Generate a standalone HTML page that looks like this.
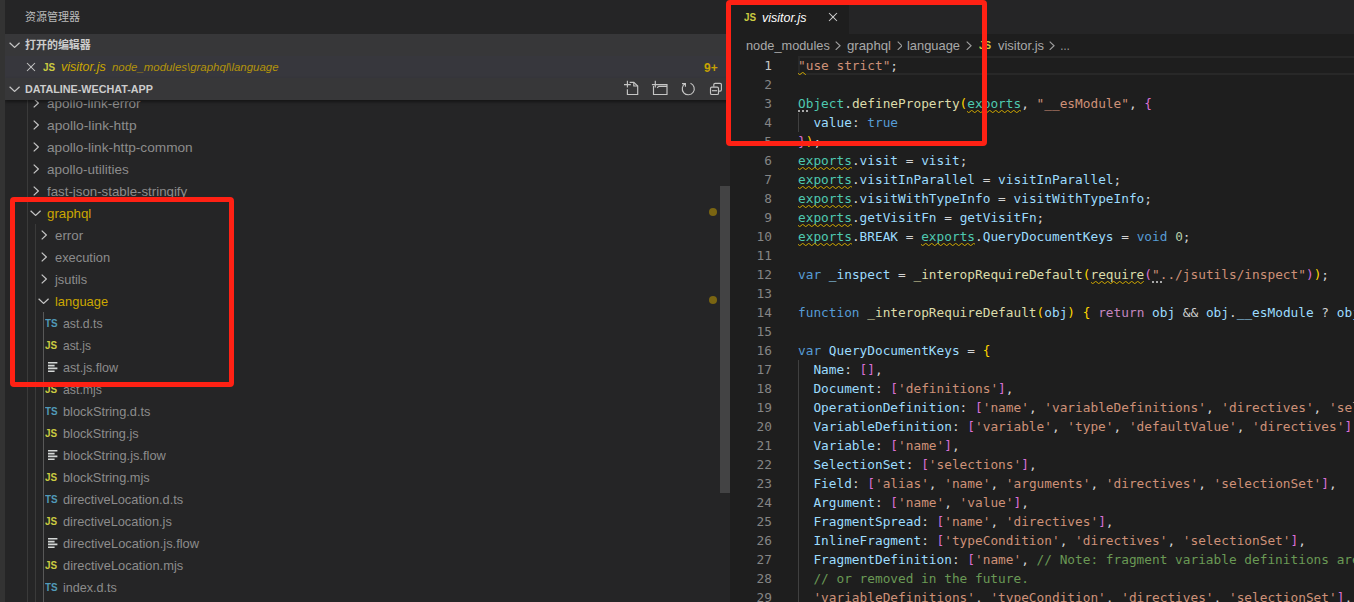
<!DOCTYPE html><html lang="zh-CN"><head><meta charset="utf-8"><title>visitor.js - dataline-wechat-app</title><style>
*{box-sizing:border-box;margin:0;padding:0}
html,body{width:1354px;height:602px;overflow:hidden;background:#1e1e1e}
body{position:relative;font-family:"Liberation Sans","Noto Sans CJK SC",sans-serif;font-size:13px;color:#ccc}
div,span,svg{position:absolute}
.code span{position:static}
#act{left:0;top:0;width:5px;height:602px;background:#333333}
#side{left:5px;top:0;width:725px;height:602px;background:#252526;overflow:hidden}
#ed{left:730px;top:0;width:624px;height:602px;background:#1e1e1e;overflow:hidden}
.t{white-space:pre;line-height:22px;height:22px;transform-origin:0 50%;margin-top:.6px}
.hdr{left:0;width:725px;height:22px;background:#373739}
.b{font-weight:bold}
.i{font-style:italic}
.ign{color:#8c8c8c}
.warn{color:#cca700}
.ic{font-weight:bold;font-size:10.5px;line-height:22px;height:22px;white-space:pre;transform-origin:0 50%;transform:scaleX(.94);margin-top:0px}
.js{color:#cbcb41}
.ts{color:#519aba}
.guide{width:1px;background:#3a3a3a}
.code{left:0;top:56px;width:624px;height:546px;color:#d4d4d4;font-family:"DejaVu Sans Mono","Liberation Mono",monospace;font-size:12.79px}
.ln{left:0;height:19px;line-height:19px;white-space:pre;width:700px}
.num{left:0;width:42px;text-align:right;color:#858585}
.src{left:68px}
.k{color:#569cd6}.c{color:#c586c0}.s{color:#ce9178}.f{color:#dcdcaa}.v{color:#9cdcfe}.o{color:#4ec9b0}.n{color:#b5cea8}.m{color:#6a9955}
.b1{color:#ffd700}.b2{color:#da70d6}.b3{color:#179fff}
.red{border:5px solid #ff2114;border-radius:4px}
</style></head><body><div id="act"></div><div id="side"><div class="t" id="ttl" style="left:20px;top:5.2px;font-size:11px;color:#bbbbbb;transform:scaleX(1.0000);">资源管理器</div>
<svg style="left:28.10px;top:98.00px" width="6.20" height="10.00" viewBox="0 0 6.20 10.00"><polyline fill="none" stroke="#c5c5c5" stroke-width="1.25" points="0.70,0.60 5.40,5.00 0.70,9.40"/></svg>
<div class="t ign" id="tree0" style="left:42px;top:92px;transform:scaleX(1.0364);">apollo-link-error</div>
<svg style="left:28.10px;top:120.00px" width="6.20" height="10.00" viewBox="0 0 6.20 10.00"><polyline fill="none" stroke="#c5c5c5" stroke-width="1.25" points="0.70,0.60 5.40,5.00 0.70,9.40"/></svg>
<div class="t ign" id="tree1" style="left:42px;top:114px;transform:scaleX(1.0598);">apollo-link-http</div>
<svg style="left:28.10px;top:142.00px" width="6.20" height="10.00" viewBox="0 0 6.20 10.00"><polyline fill="none" stroke="#c5c5c5" stroke-width="1.25" points="0.70,0.60 5.40,5.00 0.70,9.40"/></svg>
<div class="t ign" id="tree2" style="left:42px;top:136px;transform:scaleX(1.0502);">apollo-link-http-common</div>
<svg style="left:28.10px;top:164.00px" width="6.20" height="10.00" viewBox="0 0 6.20 10.00"><polyline fill="none" stroke="#c5c5c5" stroke-width="1.25" points="0.70,0.60 5.40,5.00 0.70,9.40"/></svg>
<div class="t ign" id="tree3" style="left:42px;top:158px;transform:scaleX(1.0385);">apollo-utilities</div>
<svg style="left:28.10px;top:186.00px" width="6.20" height="10.00" viewBox="0 0 6.20 10.00"><polyline fill="none" stroke="#c5c5c5" stroke-width="1.25" points="0.70,0.60 5.40,5.00 0.70,9.40"/></svg>
<div class="t ign" id="tree4" style="left:42px;top:180px;transform:scaleX(1.0213);">fast-json-stable-stringify</div>
<svg style="left:25.40px;top:209.90px" width="11.20" height="6.20" viewBox="0 0 11.20 6.20"><polyline fill="none" stroke="#c5c5c5" stroke-width="1.25" points="0.60,0.70 5.60,5.40 10.60,0.70"/></svg>
<div class="t warn" id="tree5" style="left:42px;top:202px;transform:scaleX(1.0213);">graphql</div>
<svg style="left:36.10px;top:230.00px" width="6.20" height="10.00" viewBox="0 0 6.20 10.00"><polyline fill="none" stroke="#c5c5c5" stroke-width="1.25" points="0.70,0.60 5.40,5.00 0.70,9.40"/></svg>
<div class="t ign" id="tree6" style="left:50px;top:224px;transform:scaleX(1.0236);">error</div>
<svg style="left:36.10px;top:252.00px" width="6.20" height="10.00" viewBox="0 0 6.20 10.00"><polyline fill="none" stroke="#c5c5c5" stroke-width="1.25" points="0.70,0.60 5.40,5.00 0.70,9.40"/></svg>
<div class="t ign" id="tree7" style="left:50px;top:246px;transform:scaleX(0.9900);">execution</div>
<svg style="left:36.10px;top:274.00px" width="6.20" height="10.00" viewBox="0 0 6.20 10.00"><polyline fill="none" stroke="#c5c5c5" stroke-width="1.25" points="0.70,0.60 5.40,5.00 0.70,9.40"/></svg>
<div class="t ign" id="tree8" style="left:50px;top:268px;transform:scaleX(0.9872);">jsutils</div>
<svg style="left:33.20px;top:297.90px" width="11.20" height="6.20" viewBox="0 0 11.20 6.20"><polyline fill="none" stroke="#c5c5c5" stroke-width="1.25" points="0.60,0.70 5.60,5.40 10.60,0.70"/></svg>
<div class="t warn" id="tree9" style="left:50px;top:290px;transform:scaleX(0.9925);">language</div>
<div class="ic ts" style="left:40.3px;top:312px">TS</div>
<div class="t ign" id="tree10" style="left:58px;top:312px;transform:scaleX(0.9446);">ast.d.ts</div>
<div class="ic js" style="left:40.2px;top:334px">JS</div>
<div class="t ign" id="tree11" style="left:58px;top:334px;transform:scaleX(0.9195);">ast.js</div>
<svg style="left:43.2px;top:362px" width="10" height="10" viewBox="0 0 10 10"><path fill="#d4d7d6" d="M0 0h9.4v1.6H0zM0 2.8h6.6v1.6H0zM0 5.6h9.4v1.6H0zM0 8.4h6.6v1.6H0z"/></svg>
<div class="t ign" id="tree12" style="left:58px;top:356px;transform:scaleX(0.9671);">ast.js.flow</div>
<div class="ic js" style="left:40.2px;top:378px">JS</div>
<div class="t ign" id="tree13" style="left:58px;top:378px;transform:scaleX(0.9448);">ast.mjs</div>
<div class="ic ts" style="left:40.3px;top:400px">TS</div>
<div class="t ign" id="tree14" style="left:58px;top:400px;transform:scaleX(0.9845);">blockString.d.ts</div>
<div class="ic js" style="left:40.2px;top:422px">JS</div>
<div class="t ign" id="tree15" style="left:58px;top:422px;transform:scaleX(0.9778);">blockString.js</div>
<svg style="left:43.2px;top:450px" width="10" height="10" viewBox="0 0 10 10"><path fill="#d4d7d6" d="M0 0h9.4v1.6H0zM0 2.8h6.6v1.6H0zM0 5.6h9.4v1.6H0zM0 8.4h6.6v1.6H0z"/></svg>
<div class="t ign" id="tree16" style="left:58px;top:444px;transform:scaleX(0.9890);">blockString.js.flow</div>
<div class="ic js" style="left:40.2px;top:466px">JS</div>
<div class="t ign" id="tree17" style="left:58px;top:466px;transform:scaleX(0.9837);">blockString.mjs</div>
<div class="ic ts" style="left:40.3px;top:488px">TS</div>
<div class="t ign" id="tree18" style="left:58px;top:488px;transform:scaleX(0.9842);">directiveLocation.d.ts</div>
<div class="ic js" style="left:40.2px;top:510px">JS</div>
<div class="t ign" id="tree19" style="left:58px;top:510px;transform:scaleX(0.9841);">directiveLocation.js</div>
<svg style="left:43.2px;top:538px" width="10" height="10" viewBox="0 0 10 10"><path fill="#d4d7d6" d="M0 0h9.4v1.6H0zM0 2.8h6.6v1.6H0zM0 5.6h9.4v1.6H0zM0 8.4h6.6v1.6H0z"/></svg>
<div class="t ign" id="tree20" style="left:58px;top:532px;transform:scaleX(0.9913);">directiveLocation.js.flow</div>
<div class="ic js" style="left:40.2px;top:554px">JS</div>
<div class="t ign" id="tree21" style="left:58px;top:554px;transform:scaleX(0.9902);">directiveLocation.mjs</div>
<div class="ic ts" style="left:40.3px;top:576px">TS</div>
<div class="t ign" id="tree22" style="left:58px;top:576px;transform:scaleX(0.9684);">index.d.ts</div>
<div class="guide" style="left:22px;top:100px;height:502px"></div>
<div class="guide" style="left:30px;top:224px;height:378px"></div>
<div class="guide" style="left:38px;top:312px;height:290px;background:#585858"></div>
<div style="left:704px;top:208px;width:8px;height:8px;border-radius:4px;background:#7a6512"></div>
<div style="left:704px;top:296px;width:8px;height:8px;border-radius:4px;background:#7a6512"></div>
<div style="left:715px;top:186px;width:10px;height:307px;background:#434344"></div>
<div class="hdr" style="top:34px"></div>
<svg style="left:4.05px;top:41.90px" width="11.20" height="6.20" viewBox="0 0 11.20 6.20"><polyline fill="none" stroke="#c5c5c5" stroke-width="1.25" points="0.60,0.70 5.60,5.40 10.60,0.70"/></svg>
<div class="t b" id="h1" style="left:20px;top:33px;font-size:11px;color:#cccccc;transform:scaleX(0.9970);">打开的编辑器</div>
<div class="hdr" style="top:56px;background:#37373d"></div>
<svg style="left:18px;top:59px" width="16" height="16" viewBox="0 0 16 16"><path fill="#c5c5c5" d="M8 8.707l3.646 3.647.708-.707L8.707 8l3.647-3.646-.707-.708L8 7.293 4.354 3.646l-.707.708L7.293 8l-3.646 3.646.707.708L8 8.707z"/></svg>
<div class="ic js" style="left:37.6px;top:56px">JS</div>
<div class="t i warn" id="oe1" style="left:55.6px;top:55.3px;transform:scaleX(0.9619);">visitor.js</div>
<div class="t i" id="oe2" style="left:107.2px;top:55.4px;font-size:11.2px;color:#b3930a;transform:scaleX(1.0216);">node_modules\graphql\language</div>
<div class="t b" id="oe3" style="left:698.6px;top:56px;font-size:12.5px;color:#c7a203;transform:scaleX(0.9604);">9+</div>
<div class="hdr" style="top:78px;box-shadow:0 2px 3px rgba(0,0,0,.45)"></div>
<svg style="left:4.05px;top:85.90px" width="11.20" height="6.20" viewBox="0 0 11.20 6.20"><polyline fill="none" stroke="#c5c5c5" stroke-width="1.25" points="0.60,0.70 5.60,5.40 10.60,0.70"/></svg>
<div class="t b" id="h2" style="left:20px;top:77px;font-size:11px;color:#cccccc;transform:scaleX(0.9781);">DATALINE-WECHAT-APP</div>
<svg style="left:610px;top:75px" width="115" height="30" viewBox="615 75 115 30" fill="none" stroke="#c5c5c5" stroke-width="1.15"><path d="M624 84.600h6.800M627.400 80.800v6.800"/><path d="M627.400 89.200V94.500H637.700V86L633.800 82.400H629.600"/><path d="M633.800 82.400V86H637.700"/><path d="M651.900 84.600h15.100V94.500H653.500V86M655.300 80.800v6.800"/><path d="M657.100 87.800L658.900 86.400H667"/><path d="M682 83.600H685.400V86.800M685.400 83.500A6 6 0 1 0 690.500 83.200"/><path d="M713.800 86.800V84.600Q713.800 83.300 715.100 83.300H720.100Q721.400 83.300 721.400 84.600V89.800Q721.400 91.100 720.100 91.100H718.900"/><rect x="710.500" y="87.100" width="8" height="7.400" rx="1.300"/><path d="M711.900 90.700h5.200"/></svg></div><div id="ed"><div style="left:0;top:0;width:624px;height:34px;background:#252526"></div>
<div style="left:0;top:0;width:118.5px;height:34px;background:#1e1e1e"></div>
<div class="ic js" style="left:13.6px;top:6px">JS</div>
<div class="t i" id="tab" style="left:32.2px;top:6px;color:#ffffff;transform:scaleX(0.9598);">visitor.js</div>
<svg style="left:95px;top:9px" width="16" height="16" viewBox="0 0 16 16"><path fill="#d0d0d0" d="M8 8.707l3.646 3.647.708-.707L8.707 8l3.647-3.646-.707-.708L8 7.293 4.354 3.646l-.707.708L7.293 8l-3.646 3.646.707.708L8 8.707z"/></svg>
<div class="t" id="bc0" style="left:16.0px;top:34px;color:#a9a9a9;transform:scaleX(0.9825);">node_modules</div>
<div class="t" id="bc1" style="left:116.6px;top:34px;color:#a9a9a9;transform:scaleX(1.0144);">graphql</div>
<div class="t" id="bc2" style="left:176.8px;top:34px;color:#a9a9a9;transform:scaleX(0.9907);">language</div>
<div class="t" id="bc3" style="left:268.2px;top:34px;color:#a9a9a9;transform:scaleX(0.9971);">visitor.js</div>
<div class="t" id="bc4" style="left:330.0px;top:34px;color:#a9a9a9;transform:scaleX(0.7692);">…</div>
<svg style="left:105.45px;top:40.65px" width="5.89" height="9.50" viewBox="0 0 5.89 9.50"><polyline fill="none" stroke="#a0a0a0" stroke-width="1.10" points="0.70,0.60 5.09,4.75 0.70,8.90"/></svg>
<svg style="left:166.56px;top:40.65px" width="5.89" height="9.50" viewBox="0 0 5.89 9.50"><polyline fill="none" stroke="#a0a0a0" stroke-width="1.10" points="0.70,0.60 5.09,4.75 0.70,8.90"/></svg>
<svg style="left:236.06px;top:40.65px" width="5.89" height="9.50" viewBox="0 0 5.89 9.50"><polyline fill="none" stroke="#a0a0a0" stroke-width="1.10" points="0.70,0.60 5.09,4.75 0.70,8.90"/></svg>
<svg style="left:319.46px;top:40.65px" width="5.89" height="9.50" viewBox="0 0 5.89 9.50"><polyline fill="none" stroke="#a0a0a0" stroke-width="1.10" points="0.70,0.60 5.09,4.75 0.70,8.90"/></svg>
<div class="ic js" style="left:249.0px;top:34px">JS</div>
<div class="code">
<div style="left:68px;top:0;width:600px;height:19px;border:2px solid #282828"></div>
<div style="left:68px;top:57px;width:1px;height:19px;background:#404040"></div>
<div style="left:68px;top:304px;width:1px;height:247px;background:#404040"></div>
<div class="ln" style="top:0px"><div class="num" style="color:#c6c6c6">1</div><div class="src"><span class="s">"use strict"</span>;</div></div>
<div class="ln" style="top:19px"><div class="num">2</div><div class="src"></div></div>
<div class="ln" style="top:38px"><div class="num">3</div><div class="src"><span class="o">Object</span>.<span class="f">defineProperty</span><span class="b1">(</span><span class="o">exports</span>, <span class="s">"__esModule"</span>, <span class="b2">{</span></div></div>
<div class="ln" style="top:57px"><div class="num">4</div><div class="src">  <span class="v">value</span>: <span class="k">true</span></div></div>
<div class="ln" style="top:76px"><div class="num">5</div><div class="src"><span class="b2">}</span><span class="b1">)</span>;</div></div>
<div class="ln" style="top:95px"><div class="num">6</div><div class="src"><span class="o">exports</span>.<span class="v">visit</span> = <span class="v">visit</span>;</div></div>
<div class="ln" style="top:114px"><div class="num">7</div><div class="src"><span class="o">exports</span>.<span class="v">visitInParallel</span> = <span class="v">visitInParallel</span>;</div></div>
<div class="ln" style="top:133px"><div class="num">8</div><div class="src"><span class="o">exports</span>.<span class="v">visitWithTypeInfo</span> = <span class="v">visitWithTypeInfo</span>;</div></div>
<div class="ln" style="top:152px"><div class="num">9</div><div class="src"><span class="o">exports</span>.<span class="v">getVisitFn</span> = <span class="v">getVisitFn</span>;</div></div>
<div class="ln" style="top:171px"><div class="num">10</div><div class="src"><span class="o">exports</span>.<span class="v">BREAK</span> = <span class="o">exports</span>.<span class="v">QueryDocumentKeys</span> = <span class="k">void</span> <span class="n">0</span>;</div></div>
<div class="ln" style="top:190px"><div class="num">11</div><div class="src"></div></div>
<div class="ln" style="top:209px"><div class="num">12</div><div class="src"><span class="k">var</span> <span class="v">_inspect</span> = <span class="f">_interopRequireDefault</span><span class="b1">(</span><span class="f">require</span><span class="b2">(</span><span class="s">"../jsutils/inspect"</span><span class="b2">)</span><span class="b1">)</span>;</div></div>
<div class="ln" style="top:228px"><div class="num">13</div><div class="src"></div></div>
<div class="ln" style="top:247px"><div class="num">14</div><div class="src"><span class="k">function</span> <span class="f">_interopRequireDefault</span><span class="b1">(</span><span class="v">obj</span><span class="b1">)</span> <span class="b1">{</span> <span class="c">return</span> <span class="v">obj</span> &amp;&amp; <span class="v">obj</span>.<span class="v">__esModule</span> ? <span class="v">obj</span> : <span class="b2">{</span> <span class="k">default</span>: <span class="v">obj</span> <span class="b2">}</span>; <span class="b1">}</span></div></div>
<div class="ln" style="top:266px"><div class="num">15</div><div class="src"></div></div>
<div class="ln" style="top:285px"><div class="num">16</div><div class="src"><span class="k">var</span> <span class="v">QueryDocumentKeys</span> = <span class="b1">{</span></div></div>
<div class="ln" style="top:304px"><div class="num">17</div><div class="src">  <span class="v">Name</span>: <span class="b2">[</span><span class="b2">]</span>,</div></div>
<div class="ln" style="top:323px"><div class="num">18</div><div class="src">  <span class="v">Document</span>: <span class="b2">[</span><span class="s">'definitions'</span><span class="b2">]</span>,</div></div>
<div class="ln" style="top:342px"><div class="num">19</div><div class="src">  <span class="v">OperationDefinition</span>: <span class="b2">[</span><span class="s">'name'</span>, <span class="s">'variableDefinitions'</span>, <span class="s">'directives'</span>, <span class="s">'selectionSet'</span><span class="b2">]</span>,</div></div>
<div class="ln" style="top:361px"><div class="num">20</div><div class="src">  <span class="v">VariableDefinition</span>: <span class="b2">[</span><span class="s">'variable'</span>, <span class="s">'type'</span>, <span class="s">'defaultValue'</span>, <span class="s">'directives'</span><span class="b2">]</span>,</div></div>
<div class="ln" style="top:380px"><div class="num">21</div><div class="src">  <span class="v">Variable</span>: <span class="b2">[</span><span class="s">'name'</span><span class="b2">]</span>,</div></div>
<div class="ln" style="top:399px"><div class="num">22</div><div class="src">  <span class="v">SelectionSet</span>: <span class="b2">[</span><span class="s">'selections'</span><span class="b2">]</span>,</div></div>
<div class="ln" style="top:418px"><div class="num">23</div><div class="src">  <span class="v">Field</span>: <span class="b2">[</span><span class="s">'alias'</span>, <span class="s">'name'</span>, <span class="s">'arguments'</span>, <span class="s">'directives'</span>, <span class="s">'selectionSet'</span><span class="b2">]</span>,</div></div>
<div class="ln" style="top:437px"><div class="num">24</div><div class="src">  <span class="v">Argument</span>: <span class="b2">[</span><span class="s">'name'</span>, <span class="s">'value'</span><span class="b2">]</span>,</div></div>
<div class="ln" style="top:456px"><div class="num">25</div><div class="src">  <span class="v">FragmentSpread</span>: <span class="b2">[</span><span class="s">'name'</span>, <span class="s">'directives'</span><span class="b2">]</span>,</div></div>
<div class="ln" style="top:475px"><div class="num">26</div><div class="src">  <span class="v">InlineFragment</span>: <span class="b2">[</span><span class="s">'typeCondition'</span>, <span class="s">'directives'</span>, <span class="s">'selectionSet'</span><span class="b2">]</span>,</div></div>
<div class="ln" style="top:494px"><div class="num">27</div><div class="src">  <span class="v">FragmentDefinition</span>: <span class="b2">[</span><span class="s">'name'</span>, <span class="m">// Note: fragment variable definitions are experimental and may be changed</span></div></div>
<div class="ln" style="top:513px"><div class="num">28</div><div class="src">  <span class="m">// or removed in the future.</span></div></div>
<div class="ln" style="top:532px"><div class="num">29</div><div class="src">  <span class="s">'variableDefinitions'</span>, <span class="s">'typeCondition'</span>, <span class="s">'directives'</span>, <span class="s">'selectionSet'</span><span class="b2">]</span>,</div></div>
<svg style="left:68.00px;top:16px" width="7.70" height="3" viewBox="0 0 7.70 3"><polyline fill="none" stroke="#d0a800" stroke-width="1" points="-1.25,0.3 1.75,2.7 4.75,0.3 7.75,2.7 10.75,0.3"/></svg>
<svg style="left:237.40px;top:54px" width="53.90" height="3" viewBox="0 0 53.90 3"><polyline fill="none" stroke="#d0a800" stroke-width="1" points="-1.25,0.3 1.75,2.7 4.75,0.3 7.75,2.7 10.75,0.3 13.75,2.7 16.75,0.3 19.75,2.7 22.75,0.3 25.75,2.7 28.75,0.3 31.75,2.7 34.75,0.3 37.75,2.7 40.75,0.3 43.75,2.7 46.75,0.3 49.75,2.7 52.75,0.3 55.75,2.7 58.75,0.3"/></svg>
<svg style="left:68.00px;top:111px" width="53.90" height="3" viewBox="0 0 53.90 3"><polyline fill="none" stroke="#d0a800" stroke-width="1" points="-1.25,0.3 1.75,2.7 4.75,0.3 7.75,2.7 10.75,0.3 13.75,2.7 16.75,0.3 19.75,2.7 22.75,0.3 25.75,2.7 28.75,0.3 31.75,2.7 34.75,0.3 37.75,2.7 40.75,0.3 43.75,2.7 46.75,0.3 49.75,2.7 52.75,0.3 55.75,2.7 58.75,0.3"/></svg>
<svg style="left:68.00px;top:130px" width="53.90" height="3" viewBox="0 0 53.90 3"><polyline fill="none" stroke="#d0a800" stroke-width="1" points="-1.25,0.3 1.75,2.7 4.75,0.3 7.75,2.7 10.75,0.3 13.75,2.7 16.75,0.3 19.75,2.7 22.75,0.3 25.75,2.7 28.75,0.3 31.75,2.7 34.75,0.3 37.75,2.7 40.75,0.3 43.75,2.7 46.75,0.3 49.75,2.7 52.75,0.3 55.75,2.7 58.75,0.3"/></svg>
<svg style="left:68.00px;top:149px" width="53.90" height="3" viewBox="0 0 53.90 3"><polyline fill="none" stroke="#d0a800" stroke-width="1" points="-1.25,0.3 1.75,2.7 4.75,0.3 7.75,2.7 10.75,0.3 13.75,2.7 16.75,0.3 19.75,2.7 22.75,0.3 25.75,2.7 28.75,0.3 31.75,2.7 34.75,0.3 37.75,2.7 40.75,0.3 43.75,2.7 46.75,0.3 49.75,2.7 52.75,0.3 55.75,2.7 58.75,0.3"/></svg>
<svg style="left:68.00px;top:168px" width="53.90" height="3" viewBox="0 0 53.90 3"><polyline fill="none" stroke="#d0a800" stroke-width="1" points="-1.25,0.3 1.75,2.7 4.75,0.3 7.75,2.7 10.75,0.3 13.75,2.7 16.75,0.3 19.75,2.7 22.75,0.3 25.75,2.7 28.75,0.3 31.75,2.7 34.75,0.3 37.75,2.7 40.75,0.3 43.75,2.7 46.75,0.3 49.75,2.7 52.75,0.3 55.75,2.7 58.75,0.3"/></svg>
<svg style="left:68.00px;top:187px" width="53.90" height="3" viewBox="0 0 53.90 3"><polyline fill="none" stroke="#d0a800" stroke-width="1" points="-1.25,0.3 1.75,2.7 4.75,0.3 7.75,2.7 10.75,0.3 13.75,2.7 16.75,0.3 19.75,2.7 22.75,0.3 25.75,2.7 28.75,0.3 31.75,2.7 34.75,0.3 37.75,2.7 40.75,0.3 43.75,2.7 46.75,0.3 49.75,2.7 52.75,0.3 55.75,2.7 58.75,0.3"/></svg>
<svg style="left:191.20px;top:187px" width="53.90" height="3" viewBox="0 0 53.90 3"><polyline fill="none" stroke="#d0a800" stroke-width="1" points="-1.25,0.3 1.75,2.7 4.75,0.3 7.75,2.7 10.75,0.3 13.75,2.7 16.75,0.3 19.75,2.7 22.75,0.3 25.75,2.7 28.75,0.3 31.75,2.7 34.75,0.3 37.75,2.7 40.75,0.3 43.75,2.7 46.75,0.3 49.75,2.7 52.75,0.3 55.75,2.7 58.75,0.3"/></svg>
<svg style="left:360.60px;top:225px" width="53.90" height="3" viewBox="0 0 53.90 3"><polyline fill="none" stroke="#d0a800" stroke-width="1" points="-1.25,0.3 1.75,2.7 4.75,0.3 7.75,2.7 10.75,0.3 13.75,2.7 16.75,0.3 19.75,2.7 22.75,0.3 25.75,2.7 28.75,0.3 31.75,2.7 34.75,0.3 37.75,2.7 40.75,0.3 43.75,2.7 46.75,0.3 49.75,2.7 52.75,0.3 55.75,2.7 58.75,0.3"/></svg>
<svg style="left:68.00px;top:54px" width="11" height="2" viewBox="0 0 11 2"><path fill="#a8a8a8" d="M0 0h2v2H0zM4 0h2v2H4zM8 0h2v2H8z"/></svg>
<svg style="left:422.20px;top:225px" width="11" height="2" viewBox="0 0 11 2"><path fill="#a8a8a8" d="M0 0h2v2H0zM4 0h2v2H4zM8 0h2v2H8z"/></svg>
</div></div><div class="red" style="left:10px;top:197px;width:224px;height:190px"></div><div class="red" style="left:726px;top:0px;width:261px;height:146px"></div></body></html>
